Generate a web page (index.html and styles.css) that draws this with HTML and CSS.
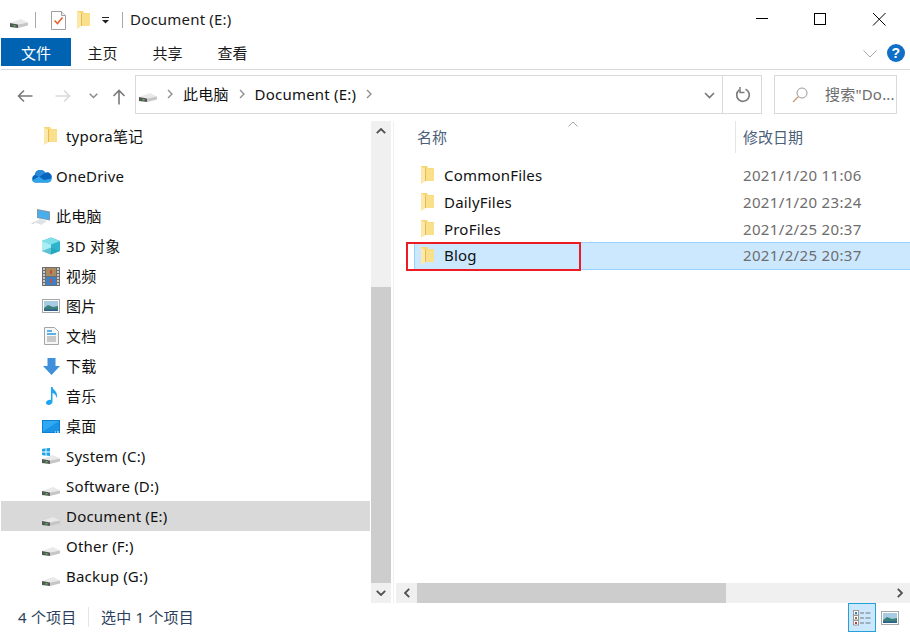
FILE: index.html
```html
<!DOCTYPE html>
<html lang="zh-CN">
<head>
<meta charset="utf-8">
<title>Document (E:)</title>
<link rel="stylesheet" href="styles.css">
</head>
<body>
<svg class="sprites" width="0" height="0" aria-hidden="true">
  <symbol id="folder" viewBox="0 0 13 18">
    <path d="M0 0h6l1 2h6v13H3z" fill="#f8d671"/>
    <path d="M4 2.500h9V15H4z" fill="#fbe08c"/>
    <path d="M4 2.500h1V15H4z" fill="#e6bb55"/>
    <path d="M0 .5 4 2.500V15.500L0 18z" fill="#fde8ab"/>
  </symbol>
  <symbol id="drive" viewBox="0 0 18 9">
    <path d="M0 4 11 0 18 3.500 8 5.500z" fill="#e9e9e9"/>
    <path d="M8 5.500 18 3.500V6.500L8 9z" fill="#c6c6c6"/>
    <path d="M0 4 8 5.500V9L0 8z" fill="#565656"/>
    <rect x="3.500" y="6" width="2" height="1.500" fill="#4fc24f"/>
  </symbol>
</svg>

<header class="titlebar">
  <svg class="tb-drive"><use href="#drive"/></svg>
  <span class="tb-sep"></span>
  <svg class="tb-doc" viewBox="0 0 15 19">
    <path d="M.5.500h10l4 4v14H.500z" fill="#fff" stroke="#a0a0a0"/>
    <path d="M10.500.500v4h4" fill="#eee" stroke="#a0a0a0"/>
    <path d="M3.500 9.500 6.500 12.500 11.500 6.500" fill="none" stroke="#e8622c" stroke-width="1.600"/>
  </svg>
  <svg class="tb-folder"><use href="#folder"/></svg>
  <svg class="tb-drop" viewBox="0 0 7 7">
    <path d="M0 .5h7" stroke="#222"/>
    <path d="M0 3h7L3.500 6.500z" fill="#222"/>
  </svg>
  <span class="tb-sep tb-sep-2"></span>
  <span class="tb-title">Document (E:)</span>
  <div class="winbtns">
    <svg class="winbtn" viewBox="0 0 58 38"><path d="M20 18.500h12" stroke="#000" fill="none"/></svg>
    <svg class="winbtn" viewBox="0 0 58 38"><rect x="20.500" y="13.500" width="11" height="11" stroke="#000" fill="none"/></svg>
    <svg class="winbtn" viewBox="0 0 58 38"><path d="M21 13l12.500 12.500M33.500 13 21 25.500" stroke="#000" fill="none"/></svg>
  </div>
</header>

<nav class="ribbon">
  <span class="tab tab-file">文件</span>
  <span class="tab">主页</span>
  <span class="tab">共享</span>
  <span class="tab">查看</span>
  <svg class="ribbon-chev" viewBox="0 0 14 8"><path d="M.5.500 7 7 13.500.500" fill="none" stroke="#a9a9a9"/></svg>
  <span class="help">?</span>
</nav>

<section class="navbar">
  <svg class="back" viewBox="0 0 16 14"><path d="M15.500 7H1.500M7 1.500 1.500 7 7 12.500" fill="none" stroke="#7a7a7a" stroke-width="1.600"/></svg>
  <svg class="fwd" viewBox="0 0 16 14"><path d="M.5 7h14M9 1.500 14.500 7 9 12.500" fill="none" stroke="#d9d9d9" stroke-width="1.600"/></svg>
  <svg class="nav-chev" viewBox="0 0 9 6"><path d="M.7.800 4.500 4.500 8.300.800" fill="none" stroke="#8a8a8a" stroke-width="1.500"/></svg>
  <svg class="up" viewBox="0 0 14 16"><path d="M7 15.500V1.500M1.500 7 7 1.500 12.500 7" fill="none" stroke="#7a7a7a" stroke-width="1.600"/></svg>
  <div class="address">
    <svg class="addr-drive"><use href="#drive"/></svg>
    <svg class="crumb" viewBox="0 0 6 10"><path d="M1 1l4 4-4 4" fill="none" stroke="#8c8c8c" stroke-width="1.300"/></svg>
    <span class="crumb-text">此电脑</span>
    <svg class="crumb" viewBox="0 0 6 10"><path d="M1 1l4 4-4 4" fill="none" stroke="#8c8c8c" stroke-width="1.300"/></svg>
    <span class="crumb-text">Document (E:)</span>
    <svg class="crumb" viewBox="0 0 6 10"><path d="M1 1l4 4-4 4" fill="none" stroke="#8c8c8c" stroke-width="1.300"/></svg>
    <svg class="addr-drop" viewBox="0 0 11 7"><path d="M1 1l4.500 4.500L10 1" fill="none" stroke="#777" stroke-width="1.600"/></svg>
    <span class="addr-refresh">
      <svg viewBox="0 0 16 16" width="16" height="16"><path d="M10.500 2.200A6.300 6.300 0 1 1 4.300 2.900" fill="none" stroke="#7d7d7d" stroke-width="1.700"/><path d="M5 0v5.500H9.500" fill="none" stroke="#7d7d7d" stroke-width="1.500"/></svg>
    </span>
  </div>
  <div class="search">
    <svg class="search-ico" viewBox="0 0 16 16"><circle cx="10" cy="6" r="5" fill="none" stroke="#9a9a9a"/><path d="M6.500 9.500 1 15" stroke="#c49a78" stroke-width="1.200"/></svg>
    <span class="search-text">搜索"Do...</span>
  </div>
</section>

<main class="main">
  <aside class="tree">
    <ul class="tree-list">
      <li class="tree-row lvl-2 gap-after"><svg class="ico-folder"><use href="#folder"/></svg>typora笔记</li>
      <li class="tree-row lvl-1 gap-after">
        <svg class="ico-cloud" viewBox="0 0 21 15"><path d="M4.500 14.500A4 4 0 0 1 3.800 6.800 5.800 5.800 0 0 1 14.500 4.800 4.500 4.500 0 0 1 20.500 10.500 4 4 0 0 1 17 14.500z" fill="#0a63bd"/><path d="M3.800 6.800A5.800 5.800 0 0 1 14.500 4.800L8 9z" fill="#2b8ad8"/><path d="M1 12.500 8 8.500l5 3.500 7.500-1.500a4 4 0 0 1-3.500 4H4.500A4 4 0 0 1 1 12.500z" fill="#2fa5e8"/></svg>
        OneDrive
      </li>
      <li class="tree-row lvl-1">
        <svg class="ico-pc" viewBox="0 0 20 18"><path d="M6 1l13 2.500v9L6 10z" fill="#7f98ad"/><path d="M7 2.300l11 2.100v7L7 9.300z" fill="#49aeeb"/><path d="M3 14l6-3 7 2-6 4z" fill="#dfe3e7"/><path d="M0 15.500l3-1.500 2 .5-3 1.500z" fill="#cfd4d8"/></svg>
        此电脑
      </li>
      <li class="tree-row lvl-2">
        <svg class="ico-3d" viewBox="0 0 18 18"><path d="M9 .5 18 4v10l-9 3.500L0 14V4z" fill="#2fb4cb"/><path d="M9 .5 18 4 9 7.500 0 4z" fill="#7fe0ea"/><path d="M9 7.500V17.500L0 14V4z" fill="#a8eef3"/><path d="M0 14l9-3.500 9 3.500-9 3.500z" fill="#1f9fb8" opacity=".55"/></svg>
        3D 对象
      </li>
      <li class="tree-row lvl-2">
        <svg class="ico-video" viewBox="0 0 18 19"><rect width="18" height="19" fill="#6e6e6e"/><path d="M1 2h2M1 5h2M1 8h2M1 11h2M1 14h2M1 17h2M15 2h2M15 5h2M15 8h2M15 11h2M15 14h2M15 17h2" stroke="#e8e8e8" stroke-width="1.500"/><rect x="4" y="1" width="10" height="8" fill="#a88b5f"/><rect x="4" y="10" width="10" height="8" fill="#3f7fc4"/><path d="M8 3h2v4H8zM8 12h2v4H8z" fill="#c94f3a"/></svg>
        视频
      </li>
      <li class="tree-row lvl-2">
        <svg class="ico-pic" viewBox="0 0 18 14"><rect x=".5" y=".5" width="17" height="13" fill="#fff" stroke="#a8a8a8"/><rect x="2" y="2" width="14" height="10" fill="#a6cbe2"/><path d="M2 9l4-3 5 2 5-1v5H2z" fill="#3d7f7a"/><path d="M2 10.500h14V12H2z" fill="#2a5f8f"/></svg>
        图片
      </li>
      <li class="tree-row lvl-2">
        <svg class="ico-docs" viewBox="0 0 15 18"><path d="M.5.500h10l4 4v13H.500z" fill="#f6f6f6" stroke="#a5a5a5"/><path d="M3 4h5M3 7h9" stroke="#2d9be0" stroke-width="1.300"/><path d="M3 10h9M3 12h9M3 14h9" stroke="#9a9a9a"/></svg>
        文档
      </li>
      <li class="tree-row lvl-2">
        <svg class="ico-down" viewBox="0 0 17 17"><path d="M4.500 0h8v8H17L8.500 17 0 8h4.500z" fill="#3f8fdc"/></svg>
        下载
      </li>
      <li class="tree-row lvl-2">
        <svg class="ico-music" viewBox="0 0 12 18"><path d="M5 0h1.500c.3 3 4.500 3.500 4.500 8.500 0 1-.3 1.800-.8 2.500.2-3-2-4.500-3.700-5V14.500C6.500 16.500 4.500 18 2.500 18 1 18 0 17 0 15.800 0 14 2 12.700 3.800 12.700c.5 0 .9.100 1.200.2z" fill="#1ea5ef"/></svg>
        音乐
      </li>
      <li class="tree-row lvl-2">
        <svg class="ico-desk" viewBox="0 0 18 13"><rect width="18" height="13" fill="#0f7fd0"/><rect x="1" y="1" width="16" height="10.500" fill="#2fa9f4"/><path d="M1 11.500 17 1v10.500z" fill="#1a93e6"/><path d="M13 12h1M15 12h2" stroke="#fff"/></svg>
        桌面
      </li>
      <li class="tree-row lvl-2">
        <span class="ico-sys">
          <svg class="ico-win" viewBox="0 0 9 9"><path d="M0 1l4-.6V4H0zM5 .3 9 0v4H5zM0 5h4v3.600L0 8zM5 5h4v4l-4-.6z" fill="#1ea5e8"/></svg>
          <svg class="ico-sysdrive"><use href="#drive"/></svg>
        </span>
        System (C:)
      </li>
      <li class="tree-row lvl-2"><svg class="ico-drive"><use href="#drive"/></svg>Software (D:)</li>
      <li class="tree-row lvl-2 selected"><svg class="ico-drive"><use href="#drive"/></svg>Document (E:)</li>
      <li class="tree-row lvl-2"><svg class="ico-drive"><use href="#drive"/></svg>Other (F:)</li>
      <li class="tree-row lvl-2"><svg class="ico-drive"><use href="#drive"/></svg>Backup (G:)</li>
    </ul>
    <div class="vscroll">
      <span class="sb-btn"><svg viewBox="0 0 10 6" width="10" height="6"><path d="M.8 5.200 5 1l4.200 4.200" fill="none" stroke="#505050" stroke-width="1.800"/></svg></span>
      <span class="vtrack-a"></span>
      <span class="vthumb"></span>
      <span class="sb-btn"><svg viewBox="0 0 10 6" width="10" height="6"><path d="M.8.800 5 5 9.200.800" fill="none" stroke="#505050" stroke-width="1.800"/></svg></span>
    </div>
  </aside>

  <section class="content">
    <div class="col-head">
      <div class="col col-name">
        <span class="col-label">名称</span>
        <svg class="sort" viewBox="0 0 10 6"><path d="M.5 5.500 5 1l4.500 4.500" fill="none" stroke="#a2a2a2"/></svg>
      </div>
      <div class="col col-date"><span class="col-label">修改日期</span></div>
    </div>
    <div class="files">
      <div class="file"><svg class="file-ico"><use href="#folder"/></svg><span class="file-name">CommonFiles</span><span class="file-date">2021/1/20 11:06</span></div>
      <div class="file"><svg class="file-ico"><use href="#folder"/></svg><span class="file-name">DailyFiles</span><span class="file-date">2021/1/20 23:24</span></div>
      <div class="file"><svg class="file-ico"><use href="#folder"/></svg><span class="file-name">ProFiles</span><span class="file-date">2021/2/25 20:37</span></div>
      <div class="file file-sel"><svg class="file-ico"><use href="#folder"/></svg><span class="file-name">Blog</span><span class="file-date">2021/2/25 20:37</span><span class="redbox"></span></div>
    </div>
    <div class="hscroll">
      <span class="hbtn"><svg viewBox="0 0 6 10" width="6" height="10"><path d="M5.200.800 1 5l4.200 4.200" fill="none" stroke="#505050" stroke-width="1.800"/></svg></span>
      <span class="hthumb"></span>
      <span class="htrack"></span>
      <span class="hbtn"><svg viewBox="0 0 6 10" width="6" height="10"><path d="M.8.800 5 5 .8 9.200" fill="none" stroke="#505050" stroke-width="1.800"/></svg></span>
    </div>
  </section>
</main>

<footer class="status">
  <span class="status-count">4 个项目</span>
  <span class="status-sel">选中 1 个项目</span>
  <span class="view view-on">
    <svg viewBox="0 0 18 16" width="18" height="16"><rect x=".5" y=".5" width="5" height="4.500" fill="#fff" stroke="#999"/><rect x=".5" y="5.500" width="5" height="4.500" fill="#fff" stroke="#999"/><rect x=".5" y="10.500" width="5" height="4.500" fill="#fff" stroke="#999"/><rect x="2" y="2" width="2" height="2" fill="#3b7fb0"/><rect x="2" y="7" width="2" height="2" fill="#a8703a"/><rect x="2" y="12" width="2" height="2" fill="#cc3322"/><path d="M7 3h4M12.500 3h5M7 8h4M12.500 8h5M7 13h4M12.500 13h5" stroke="#777"/></svg>
  </span>
  <span class="view">
    <svg viewBox="0 0 18 14" width="18" height="14"><rect x=".5" y=".5" width="17" height="13" fill="#fff" stroke="#a8a8a8"/><rect x="2" y="2" width="14" height="10" fill="#a6cbe2"/><path d="M2 9l4-3 5 2 5-1v5H2z" fill="#3d7f7a"/><path d="M2 10.500h14V12H2z" fill="#2a5f8f"/></svg>
  </span>
</footer>
</body>
</html>
```

FILE: styles.css
```css
* { box-sizing: border-box; }
html, body { margin: 0; padding: 0; }
body {
  width: 910px;
  height: 633px;
  overflow: hidden;
  background: #fff;
  color: #000;
  font-family: "Noto Sans", "Noto Sans CJK SC", sans-serif;
  font-size: 15px;
  letter-spacing: .2px;
  display: flex;
  flex-direction: column;
}
svg { display: block; flex: none; }
.sprites { position: absolute; }

/* title bar */
.titlebar { height: 38px; display: flex; align-items: center; flex: none; }
.tb-drive { width: 18px; height: 9px; margin: 9px 0 0 10px; }
.tb-sep { width: 1px; height: 16px; background: #a8a8a8; margin: 2px 0 0 7px; }
.tb-doc { width: 15px; height: 19px; margin: 2px 0 0 15px; }
.tb-folder { width: 13px; height: 18px; margin: 2px 0 0 11px; }
.tb-drop { width: 7px; height: 7px; margin: 3px 0 0 12px; }
.tb-sep-2 { margin-left: 13px; }
.tb-title { margin: -1px 0 0 7px; color: #1a1a1a; }
.winbtns { margin-left: auto; display: flex; }
.winbtn { width: 58px; height: 38px; }

/* ribbon */
.ribbon {
  height: 32px;
  flex: none;
  display: flex;
  align-items: flex-start;
  margin-left: 1px;
  border-bottom: 1px solid #dadada;
  padding-right: 5px;
}
.tab { width: 65px; height: 28px; line-height: 30px; text-align: center; color: #1a1a1a; letter-spacing: 0; }
.tab-file { width: 70px; background: #0063b1; color: #fff; margin-right: -1px; }
.ribbon-chev { width: 14px; height: 8px; margin: 12px 0 0 auto; }
.help {
  width: 18px; height: 18px; margin: 6px 0 0 10px;
  border-radius: 50%;
  background: #0f6fc6;
  color: #fff;
  font: 700 14px/18px "Liberation Sans", sans-serif;
  text-align: center;
}

/* navigation */
.navbar { height: 51px; flex: none; display: flex; align-items: center; padding-bottom: 2px; }
.back { width: 16px; height: 14px; margin: 2px 0 0 17px; }
.fwd { width: 16px; height: 14px; margin: 2px 0 0 22px; }
.nav-chev { width: 9px; height: 6px; margin: 2px 0 0 18px; }
.up { width: 14px; height: 16px; margin: 4px 0 0 14px; }
.address {
  width: 627px; height: 39px; margin-left: 9px;
  border: 1px solid #d9d9d9;
  display: flex; align-items: center;
}
.addr-drive { width: 18px; height: 9px; margin: 6px 0 0 3px; }
.crumb { width: 6px; height: 10px; margin: -2px 10px 0 10px; }
.crumb-text { color: #111; margin-top: -2px; }
.addr-drop { width: 11px; height: 7px; margin: 1px 0 0 auto; }
.addr-refresh {
  width: 39px; height: 37px; margin-left: 7px; padding-left: 2px;
  border-left: 1px solid #d9d9d9;
  display: flex; align-items: center; justify-content: center;
}
.search {
  width: 123px; height: 39px; margin-left: 12px;
  border: 1px solid #d9d9d9;
  display: flex; align-items: center;
  overflow: hidden;
}
.search-ico { width: 16px; height: 16px; margin-left: 17px; }
.search-text { margin: -2px 0 0 17px; color: #6d6d6d; white-space: nowrap; }

/* main */
.main { height: 482px; flex: none; display: flex; }
.tree { width: 393px; display: flex; flex: none; margin-left: 1px; border-right: 1px solid #f0f0f0; }
.tree-list { width: 369px; list-style: none; margin: 0; padding: 0; flex: none; }
.tree-row { height: 30px; display: flex; align-items: center; white-space: nowrap; color: #111; line-height: 28px; }
.lvl-1 { padding-left: 30px; }
.lvl-2 { padding-left: 41px; }
.gap-after { margin-bottom: 10px; }
.selected { background: #d9d9d9; }

.ico-folder { width: 13px; height: 18px; margin: 0 9px 0 2px; }
.ico-cloud { width: 21px; height: 15px; margin: -1px 4px 0 0; }
.ico-pc { width: 20px; height: 18px; margin: 2px 5px 0 0; }
.ico-3d { width: 18px; height: 18px; margin-right: 6px; }
.ico-video { width: 18px; height: 19px; margin-right: 6px; }
.ico-pic { width: 18px; height: 14px; margin-right: 6px; }
.ico-docs { width: 15px; height: 18px; margin: 0 7px 0 2px; }
.ico-down { width: 17px; height: 17px; margin: 0 6px 0 1px; }
.ico-music { width: 12px; height: 18px; margin: 0 8px 0 4px; }
.ico-desk { width: 18px; height: 13px; margin-right: 6px; }
.ico-drive { width: 18px; height: 9px; margin: 10px 6px 0 0; }
.ico-sys { width: 18px; height: 18px; margin: 1px 6px 0 0; display: flex; flex-direction: column; }
.ico-win { width: 8px; height: 8px; }
.ico-sysdrive { width: 18px; height: 9px; margin-top: -1px; }

/* vertical scrollbar */
.vscroll { width: 20px; margin-left: 1px; background: #f0f0f0; display: flex; flex-direction: column; }
.sb-btn { height: 20px; display: flex; align-items: center; justify-content: center; flex: none; }
.vtrack-a { height: 146px; flex: none; }
.vthumb { height: 296px; background: #cdcdcd; flex: none; }

/* content */
.content { flex: 1; min-width: 0; display: flex; flex-direction: column; margin-left: 2px; }
.col-head { height: 33px; display: flex; flex: none; color: #4c607a; letter-spacing: 0; }
.col { height: 32px; display: flex; align-items: center; }
.col-label { margin-top: -2px; }
.col-name { width: 340px; padding-left: 21px; border-right: 1px solid #e5e5e5; }
.sort { width: 10px; height: 6px; margin: -26px 0 0 121px; }
.col-date { padding-left: 7px; }

.files { flex: 1; padding-top: 8px; min-height: 0; }
.file { height: 27px; display: flex; align-items: center; position: relative; margin-left: 18px; }
.file-ico { width: 13px; height: 18px; margin: -1px 0 0 7px; }
.file-name { width: 299px; margin: -2px 0 0 10px; color: #111; }
.file-date { margin-top: -2px; color: #6d6d6d; letter-spacing: .35px; }
.file-sel { background: #cce8ff; border: 1px solid #99d1ff; border-right: 0; height: 28px; margin-top: -1px; }
.file-sel .file-ico { margin-left: 6px; }
.redbox { position: absolute; left: -9px; top: -1px; width: 175px; height: 29px; border: 2px solid #ed1c24; }

/* horizontal scrollbar */
.hscroll { height: 20px; flex: none; display: flex; background: #f0f0f0; }
.hbtn { width: 21px; flex: none; display: flex; align-items: center; justify-content: center; }
.hthumb { width: 309px; background: #cdcdcd; flex: none; }
.htrack { flex: 1; }

/* status bar */
.status { flex: 1; display: flex; align-items: flex-start; color: #2b3f5c; min-height: 0; }
.status-count { width: 88px; padding-left: 18px; line-height: 28px; }
.status-sel { margin-top: 4px; padding-left: 12px; border-left: 1px solid #e5e5e5; height: 20px; line-height: 20px; }
.view { width: 28px; height: 29px; display: flex; align-items: center; justify-content: center; }
.view-on { margin-left: auto; background: #cce8ff; border: 1px solid #26a0da; }
.view:last-child { margin: 0 7px 0 0; width: 27px; }
```
